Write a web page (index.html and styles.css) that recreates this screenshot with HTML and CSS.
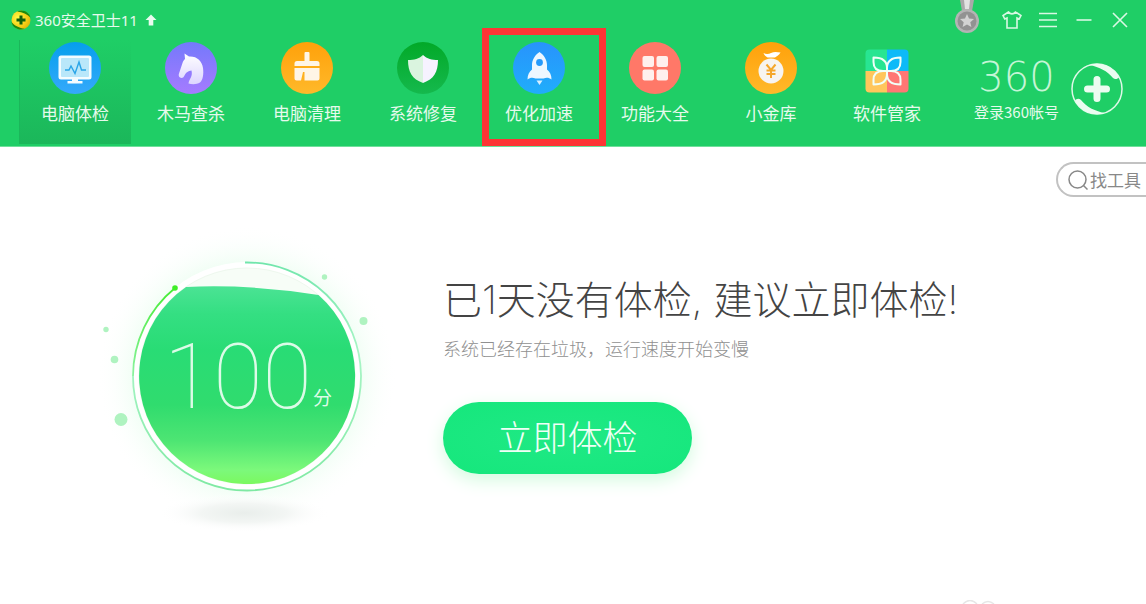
FILE: index.html
```html
<!DOCTYPE html>
<html lang="zh-CN">
<head>
<meta charset="utf-8">
<meta name="viewport" content="width=device-width, initial-scale=1">
<title>360安全卫士11</title>
<link rel="stylesheet" href="styles.css">
</head>
<body>
<header class="header">
  <div class="titlebar">
    <svg class="app-icon" viewBox="0 0 20 20" aria-hidden="true">
      <defs><radialGradient id="gold" cx=".35" cy=".4" r=".7"><stop offset="0" stop-color="#ffff4a"/><stop offset=".7" stop-color="#f5c913"/><stop offset="1" stop-color="#d8b60a"/></radialGradient></defs>
      <circle cx="10" cy="10" r="9.5" fill="url(#gold)"/>
      <path d="M6 1.5C12-1 18 2 19.500 7.500C16 4 12 2.500 6 1.500ZM.5 12C4 16 8 18 14 18.800C8 21 1.500 18 .5 12Z" fill="#1c8a12"/>
      <path d="M8.500 5.500h3v3h3v3h-3v3h-3v-3h-3v-3h3Z" fill="#14610b"/>
    </svg>
    <h1 class="app-name">360安全卫士11</h1>
    <button class="upgrade" type="button" aria-label="升级"><svg viewBox="0 0 12 12"><path d="M6 .5L11.500 6H8.300V11.500H3.700V6H.5Z" fill="#e9fbef"/></svg></button>
    <div class="window-tools">
      <button class="medal" type="button" aria-label="勋章"><svg viewBox="0 0 26 34"><path d="M6 0H20L18 11H8Z" fill="#a9a9a9"/><path d="M10 0H16L15 9H11Z" fill="#e2e2e2"/><circle cx="13" cy="21" r="12" fill="#b4b4b4"/><circle cx="13" cy="21" r="9.500" fill="#929292"/><path d="M13 14L15 18.500L20 19L16.300 22.300L17.400 27L13 24.600L8.600 27L9.700 22.300L6 19L11 18.500Z" fill="#d2d2d2"/></svg></button>
      <button class="tool" type="button" aria-label="皮肤"><svg viewBox="0 0 20 20"><path d="M6.500 2L1 5.500L2.800 9L5 8V18H15V8L17.200 9L19 5.500L13.500 2C12 4.500 8 4.500 6.500 2Z"/></svg></button>
      <button class="tool" type="button" aria-label="菜单"><svg viewBox="0 0 20 20"><path d="M1 3.500H19M1 10H19M1 16.500H19"/></svg></button>
      <button class="tool" type="button" aria-label="最小化"><svg viewBox="0 0 20 20"><path d="M2.500 10H17.500"/></svg></button>
      <button class="tool" type="button" aria-label="关闭"><svg viewBox="0 0 20 20"><path d="M3 3L17 17M17 3L3 17"/></svg></button>
    </div>
  </div>

  <div class="navbar">
    <nav class="tabs">
      <button class="tab tab-active" type="button">
        <svg class="tab-icon" viewBox="0 0 52 52"><defs><linearGradient id="blue" x2="0" y2="1"><stop stop-color="#069fec"/><stop offset="1" stop-color="#35a9fb"/></linearGradient></defs><circle cx="26" cy="26" r="26" fill="url(#blue)"/><rect x="9.500" y="13.500" width="33" height="24" rx="2.500" fill="#f4fcff"/><rect x="12" y="16" width="28" height="19" rx="1" fill="#b9e7fa"/><path d="M23 37H29V39H33.500V41.500H18.500V39H23Z" fill="#f4fcff"/><path d="M16 28H20L22 24L26 31.500L30 20L32.500 28H37" fill="none" stroke="#2aa5e8" stroke-width="1.400"/></svg>
        <span>电脑体检</span>
      </button>
      <button class="tab" type="button">
        <svg class="tab-icon" viewBox="0 0 52 52"><defs><linearGradient id="violet" x2="0" y2="1"><stop stop-color="#7479fb"/><stop offset="1" stop-color="#a67bff"/></linearGradient><linearGradient id="horse" x2="0" y2="1"><stop stop-color="#fff"/><stop offset="1" stop-color="#ddd5ff"/></linearGradient></defs><circle cx="26" cy="26" r="26" fill="url(#violet)"/><path d="M19.500 11.500L24 14.500C32 14 37 19 38 26C38.800 32 38 38 35 40.500C32 42.500 27 42.500 23.500 41.500C24 37 28 35 26.500 28.500C23 29 21.500 30 19.500 33.500C18.500 36 16.500 36.500 15 35.500C13.500 34.500 13.500 33 14 31.500L17.500 21C18 19 19 18 20 17Z" fill="url(#horse)"/></svg>
        <span>木马查杀</span>
      </button>
      <button class="tab" type="button">
        <svg class="tab-icon" viewBox="0 0 52 52"><defs><linearGradient id="amber" x2="0" y2="1"><stop stop-color="#ffa10a"/><stop offset="1" stop-color="#ffb92a"/></linearGradient></defs><circle cx="26" cy="26" r="26" fill="url(#amber)"/><path d="M23.500 11Q23.500 10 24.500 10H27.500Q28.500 10 28.500 11V19H36Q38.500 19 38.500 21.500V24H13.500V21.500Q13.500 19 16 19H23.500ZM13.500 26H38.500V36.500Q38.500 38.500 36.500 38.500H23.500V30H22L20 38.500H15.500Q13.500 38.500 13.500 36.500Z" fill="#fff5e6"/></svg>
        <span>电脑清理</span>
      </button>
      <button class="tab" type="button">
        <svg class="tab-icon" viewBox="0 0 52 52"><defs><linearGradient id="forest" x2="0" y2="1"><stop stop-color="#02a928"/><stop offset="1" stop-color="#15b94d"/></linearGradient></defs><circle cx="26" cy="26" r="26" fill="url(#forest)"/><path d="M26 13C22 17 17 18 11 18C11 30 15 37 26 41Z" fill="#daf4df"/><path d="M26 13C30 17 35 18 41 18C41 30 37 37 26 41Z" fill="#f6f2ff"/></svg>
        <span>系统修复</span>
      </button>
      <button class="tab tab-marked" type="button">
        <svg class="tab-icon" viewBox="0 0 52 52"><defs><linearGradient id="azure" x2="0" y2="1"><stop stop-color="#2893fc"/><stop offset="1" stop-color="#20adfb"/></linearGradient></defs><circle cx="26" cy="26" r="26" fill="url(#azure)"/><path d="M26.500 10C22 13 19 18 19 23V27.500C16 30 14.500 33 14.500 37.500C17 35.500 19.500 35 22.500 36.500H30.500C33.500 35 36 35.500 38.500 37.500C38.500 33 37 30 34 27.500V23C34 18 31 13 26.500 10Z" fill="#eef7ff"/><circle cx="26.500" cy="20.500" r="3.400" fill="#269afb"/><path d="M23.500 38.500H29.500L26.500 43Z" fill="#d9efff"/></svg>
        <span>优化加速</span>
      </button>
      <button class="tab" type="button">
        <svg class="tab-icon" viewBox="0 0 52 52"><circle cx="26" cy="26" r="26" fill="#ff7868"/><g fill="#fff0ed"><rect x="13.500" y="14" width="11.500" height="11" rx="2"/><rect x="27.500" y="14" width="11.500" height="11" rx="2"/><rect x="13.500" y="27.500" width="11.500" height="11" rx="2"/><rect x="27.500" y="27.500" width="11.500" height="11" rx="2"/></g></svg>
        <span>功能大全</span>
      </button>
      <button class="tab" type="button">
        <svg class="tab-icon" viewBox="0 0 52 52"><circle cx="26" cy="26" r="26" fill="url(#amber)"/><path d="M18.500 11C21 12.500 24 12 26 11C29 9.500 32 10 35.500 10.500C34 13 32 14 30 15.500H22.500C20.500 14 19 13 18.500 11Z" fill="#fff"/><circle cx="26" cy="29" r="12.500" fill="#f7f4f0"/><path d="M21.500 22.500L26 28L30.500 22.500M26 28V36M21.500 28.500H30.500M21.500 32H30.500" fill="none" stroke="#f5a72c" stroke-width="2"/></svg>
        <span>小金库</span>
      </button>
      <button class="tab" type="button">
        <svg class="tab-icon" viewBox="0 0 52 52"><defs><clipPath id="tile"><rect x="4.500" y="7.500" width="43" height="43" rx="4"/></clipPath></defs><g clip-path="url(#tile)"><path d="M4 7H26V29H4Z" fill="#28e592"/><path d="M26 7H48V29H26Z" fill="#0dbaf8"/><path d="M4 29H26V51H4Z" fill="#ffc65c"/><path d="M26 29H48V51H26Z" fill="#ff7774"/></g><path d="M26 29V26C26 19.500 22 15.500 12.500 15.500V20C12.500 26 16 29 22 29ZM26 29V26C26 19.500 30 15.500 39.500 15.500V20C39.500 26 36 29 30 29ZM26 29V32C26 38.500 22 42.500 12.500 42.500V38C12.500 32 16 29 22 29ZM26 29V32C26 38.500 30 42.500 39.500 42.500V38C39.500 32 36 29 30 29Z" fill="none" stroke="#f1fff8" stroke-width="2" stroke-linejoin="round"/></svg>
        <span>软件管家</span>
      </button>
    </nav>
    <div class="account">
      <div class="account-text">
        <span class="brand">360</span>
        <a class="login" href="#">登录360帐号</a>
      </div>
      <svg class="badge" viewBox="0 0 52 52" aria-hidden="true"><circle cx="26" cy="26" r="25" fill="none" stroke="#dff9e8" stroke-width="1.500"/><path d="M18 2C30-2 43 4 48 14C47 16 44 17 42 15C36 8 29 4 18 2ZM34 50C22 54 9 48 4 38C5 35.500 8 35 10 37C16 44 23 48 34 50Z" fill="#eafcf0"/><path d="M26 16.500V35.500M16.500 26H35.500" stroke="#ecfcf1" stroke-width="7" stroke-linecap="round"/></svg>
    </div>
  </div>
</header>

<main class="main">
  <form class="search">
    <label class="search-label" for="tool-search" aria-label="找工具"><svg viewBox="0 0 20 20"><circle cx="9.500" cy="9.500" r="8.500"/><path d="M15.500 15.500L19.500 19.500"/></svg></label>
    <input class="search-input" id="tool-search" type="text" placeholder="找工具">
  </form>

  <section class="hero">
    <svg class="dial" viewBox="0 0 300 300" role="img" aria-label="100分">
      <defs>
        <linearGradient id="liquid" x2="0" y2="1"><stop stop-color="#4be394"/><stop offset=".14" stop-color="#34df82"/><stop offset=".32" stop-color="#29dc75"/><stop offset=".6" stop-color="#30dc6e"/><stop offset=".78" stop-color="#4de573"/><stop offset=".93" stop-color="#7cf97b"/><stop offset="1" stop-color="#7bf95f"/></linearGradient>
        <linearGradient id="ring" x2="0" y2="1"><stop stop-color="#71e6ac"/><stop offset=".4" stop-color="#a9f5c6"/><stop offset="1" stop-color="#7fe9a3"/></linearGradient>
        <linearGradient id="ringtip" x2="0" y2="1"><stop stop-color="#45ec35"/><stop offset="1" stop-color="#8bf2a0"/></linearGradient>
        <radialGradient id="glow"><stop offset=".74" stop-color="#f0fef4"/><stop offset="1" stop-color="#fff" stop-opacity="0"/></radialGradient>
        <radialGradient id="shade"><stop stop-color="#e9eeeb"/><stop offset=".5" stop-color="#f3f6f4"/><stop offset="1" stop-color="#fff" stop-opacity="0"/></radialGradient>
      </defs>
      <circle cx="157" cy="136" r="150" fill="url(#glow)"/>
      <ellipse cx="154" cy="273" rx="86" ry="19" fill="url(#shade)"/>
      <circle cx="157" cy="136" r="114" fill="#fff"/>
      <circle cx="157" cy="136" r="108" fill="#f7fdf7" stroke="#eef8ee" stroke-width="1"/>
      <path d="M96 47Q160 44 228.500 55A108 108 0 1 1 96 47Z" fill="url(#liquid)"/>
      <path d="M155 22.500A114 114 0 1 1 43 136" fill="none" stroke="url(#ring)" stroke-width="1.800"/>
      <path d="M43 136A114 114 0 0 1 85 48" fill="none" stroke="url(#ringtip)" stroke-width="1.800"/>
      <circle cx="85" cy="48" r="2.800" fill="#3fee27"/>
      <g fill="#aff3c0"><circle cx="16" cy="89.500" r="2.700"/><circle cx="24.500" cy="119.500" r="3.800"/><circle cx="31" cy="179.500" r="6.500"/><circle cx="234.500" cy="37" r="2.700"/><circle cx="273.500" cy="81" r="4"/></g>
      <text class="score" x="74" y="168">100</text>
      <text class="score-unit" x="223" y="165">分</text>
    </svg>
    <div class="message">
      <h2 class="headline">已1天没有体检, 建议立即体检!</h2>
      <p class="detail">系统已经存在垃圾，运行速度开始变慢</p>
      <button class="check" type="button">立即体检</button>
    </div>
  </section>
</main>

<footer class="footer">
  <svg class="cloud" viewBox="0 0 36 4" aria-hidden="true"><path d="M1 4Q8-3 15 4M20 4Q26-1 32 4" fill="none" stroke="#e6e6e6" stroke-width="1.500"/></svg>
</footer>
</body>
</html>
```

FILE: styles.css
```css
* { box-sizing: border-box; }

body {
  display: flex;
  flex-direction: column;
  min-height: 100vh;
  margin: 0;
  overflow-x: hidden;
  background: #fff;
  font-family: "Noto Sans", "Noto Sans CJK SC", sans-serif;
}

button {
  padding: 0;
  border: 0;
  background: none;
  color: inherit;
  font: inherit;
  cursor: pointer;
}

svg { display: block; }

.header {
  padding-bottom: 2px;
  border-bottom: 1px solid #6fe09b;
  background: #1fce66;
  color: #e6faed;
}

.titlebar {
  display: flex;
  align-items: center;
  height: 40px;
  padding: 0 8px 0 11px;
}

.app-icon { width: 20px; height: 20px; }

.app-name {
  margin: 0 0 0 4px;
  font-size: 15px;
  font-weight: 400;
  line-height: 20px;
}

.upgrade { margin-left: 7px; }
.upgrade svg { width: 12px; height: 12px; }

.window-tools {
  display: flex;
  align-items: center;
  margin-left: auto;
}

.medal {
  align-self: flex-start;
  margin-right: 14px;
}

.medal svg { width: 26px; height: 34px; }

.tool {
  display: grid;
  place-items: center;
  width: 36px;
  height: 40px;
}

.tool svg {
  width: 20px;
  height: 20px;
  fill: none;
  stroke: #d9f8e4;
  stroke-width: 1.6;
}

.navbar {
  display: flex;
  justify-content: space-between;
  padding: 0 23px 0 19px;
}

.tabs { display: flex; gap: 4px; }

.tab {
  position: relative;
  display: flex;
  flex-direction: column;
  align-items: center;
  gap: 8px;
  width: 112px;
  padding: 2px 0 18px;
  font-size: 17px;
  line-height: 24px;
}

.tab-active {
  background: linear-gradient(#1fce66, #1bb75a);
  box-shadow: inset 1px 0 #1bb75a;
}

.tab-icon { width: 52px; height: 52px; }

.tab-marked::after {
  content: "";
  position: absolute;
  inset: -12px -11px -2px -1px;
  border: 7px solid #fd3535;
}

.account {
  display: flex;
  align-items: center;
  gap: 12px;
  padding-bottom: 6px;
}

.account-text {
  display: flex;
  flex-direction: column;
  align-items: center;
  gap: 5px;
}

.brand {
  color: #c5f5d6;
  font-family: "DejaVu Sans", sans-serif;
  font-size: 40px;
  font-weight: 200;
  line-height: 40px;
}

.login {
  color: inherit;
  font-family: "Noto Sans CJK SC", sans-serif;
  font-size: 15px;
  line-height: 20px;
  text-decoration: none;
}

.badge { width: 52px; height: 52px; }

.search {
  display: flex;
  align-items: center;
  gap: 2px;
  width: 90px;
  height: 35px;
  margin: 15px 0 0 auto;
  padding-left: 10px;
  border: 2px solid #c2c2c2;
  border-right: 0;
  border-radius: 18px 0 0 18px;
}

.search-label svg {
  width: 20px;
  height: 20px;
  fill: none;
  stroke: #888;
  stroke-width: 1.5;
}

.search-input {
  flex: 1;
  min-width: 0;
  padding: 0;
  border: 0;
  outline: 0;
  background: none;
  color: #777;
  font: 17px "Noto Sans CJK SC", sans-serif;
}

.search-input::placeholder { color: #888; }

.hero {
  display: flex;
  gap: 53px;
  padding: 43px 20px 0 90px;
}

.dial {
  flex: none;
  width: 300px;
  height: 300px;
  overflow: visible;
}

.score {
  fill: #dcfbe7;
  font-family: Roboto, sans-serif;
  font-size: 90px;
  font-weight: 100;
}

.score-unit {
  fill: #dcfbe7;
  font-family: "Noto Sans CJK SC", sans-serif;
  font-size: 19px;
}

.message { padding-top: 32px; }

.headline {
  margin: 0;
  color: #444;
  font-family: Inter, "Noto Sans CJK SC", sans-serif;
  font-size: 39px;
  font-weight: 200;
  line-height: 56px;
  white-space: nowrap;
}

.detail {
  margin: 8px 0 0;
  color: #909090;
  font-size: 18px;
  font-weight: 300;
  line-height: 26px;
}

.check {
  width: 249px;
  height: 72px;
  margin-top: 40px;
  padding-bottom: 4px;
  border-radius: 36px;
  background: radial-gradient(#20e985, #15e77c);
  box-shadow: 0 6px 18px #d3fbdf;
  color: #f0fff6;
  font-family: "Noto Sans CJK SC", sans-serif;
  font-size: 35px;
  font-weight: 300;
  line-height: 52px;
}

.footer {
  display: flex;
  justify-content: flex-end;
  margin-top: auto;
  padding-right: 148px;
}

.cloud { width: 36px; height: 4px; }
```
